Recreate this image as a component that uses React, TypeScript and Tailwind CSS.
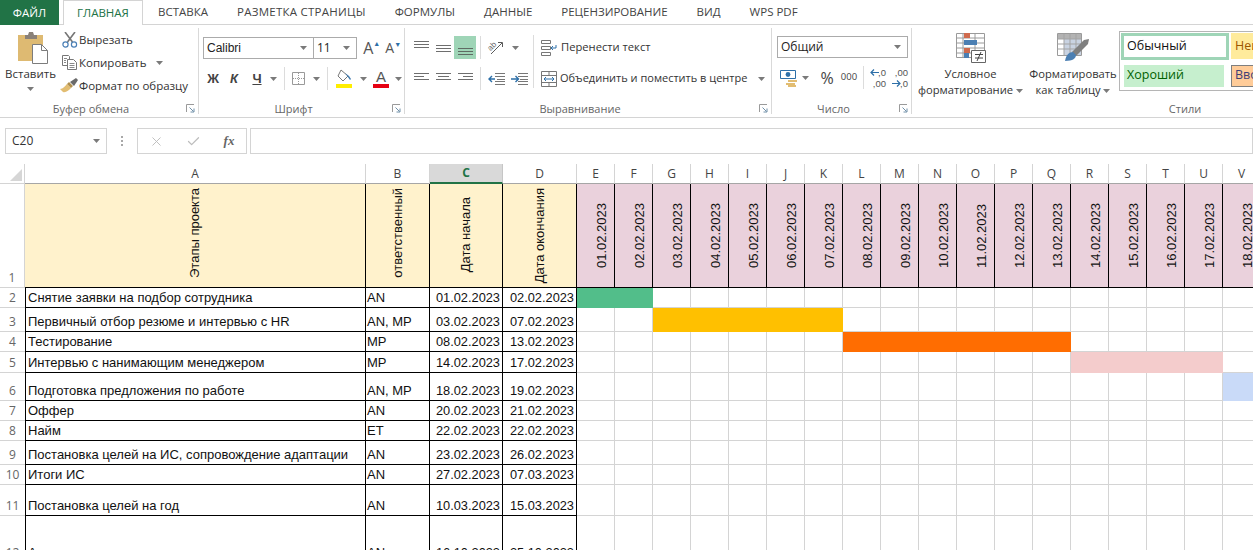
import type { ReactNode } from "react";
import { Check, X } from "lucide-react";

const tabs = ["ВСТАВКА", "РАЗМЕТКА СТРАНИЦЫ", "ФОРМУЛЫ", "ДАННЫЕ", "РЕЦЕНЗИРОВАНИЕ", "ВИД", "WPS PDF"];

const dateCols = "EFGHIJKLMNOPQRSTUV".split("");

type Row = { n: number; task: string; who: string; start: string; end: string; bar?: [number, number, string] };

const rows: Row[] = [
  { n: 2, task: "Снятие заявки на подбор сотрудника", who: "AN", start: "01.02.2023", end: "02.02.2023", bar: [0, 1, "bg-[#52be8a]"] },
  { n: 3, task: "Первичный отбор резюме и интервью с HR", who: "AN, MP", start: "03.02.2023", end: "07.02.2023", bar: [2, 6, "bg-[#ffc000]"] },
  { n: 4, task: "Тестирование", who: "MP", start: "08.02.2023", end: "13.02.2023", bar: [7, 12, "bg-[#ff6d01]"] },
  { n: 5, task: "Интервью с нанимающим менеджером", who: "MP", start: "14.02.2023", end: "17.02.2023", bar: [13, 16, "bg-[#f4cccc]"] },
  { n: 6, task: "Подготовка предложения по работе", who: "AN, MP", start: "18.02.2023", end: "19.02.2023", bar: [17, 17, "bg-[#c9daf8]"] },
  { n: 7, task: "Оффер", who: "AN", start: "20.02.2023", end: "21.02.2023" },
  { n: 8, task: "Найм", who: "ET", start: "22.02.2023", end: "22.02.2023" },
  { n: 9, task: "Постановка целей на ИС, сопровождение адаптации", who: "AN", start: "23.02.2023", end: "26.02.2023" },
  { n: 10, task: "Итоги ИС", who: "AN", start: "27.02.2023", end: "07.03.2023" },
  { n: 11, task: "Постановка целей на год", who: "AN", start: "10.03.2023", end: "15.03.2023" },
  { n: 12, task: "Адаптация", who: "AN", start: "16.10.2023", end: "25.10.2023" },
];

function Caret({ className = "" }: { className?: string }) {
  return (
    <svg width="7" height="4" viewBox="0 0 7 4" className={`flex-none ${className}`}>
      <path d="M0 0h7L3.5 4z" fill="#7a7a7a" />
    </svg>
  );
}

function Launcher() {
  return (
    <svg width="9" height="9" viewBox="0 0 9 9" className="flex-none">
      <path d="M0.5 8V0.5H8" fill="none" stroke="#9a9a9a" />
      <path d="M3.5 3.5L7.5 7.5M8 4.5V8H4.5" fill="none" stroke="#6f8fa8" />
    </svg>
  );
}

function Lines({ ys, x1 = [1, 1, 1], x2 = [16, 16, 16], color = "#6e6e6e" }: { ys: number[]; x1?: number[]; x2?: number[]; color?: string }) {
  return (
    <svg width="17" height="14" viewBox="0 0 17 14">
      {ys.map((y, i) => (
        <path key={y} d={`M${x1[i]} ${y + 0.5}H${x2[i]}`} stroke={color} />
      ))}
    </svg>
  );
}

function PasteIcon() {
  return (
    <svg width="30" height="32" viewBox="0 0 30 32">
      <path d="M0 3h25v26H0z" fill="#deba72" />
      <path d="M7 3h3l1-3h4l1 3h3v4H7z" fill="#8a8178" />
      <path d="M14.5 12.5h9l6 6v13h-15z" fill="#fff" stroke="#7c7c7c" />
      <path d="M23.5 12.5v6h6" fill="none" stroke="#7c7c7c" />
    </svg>
  );
}

function ScissorsIcon() {
  return (
    <svg width="16" height="16" viewBox="0 0 16 16">
      <path d="M3 0l7.5 10M13 0L5.5 10" stroke="#767676" strokeWidth="1.6" fill="none" />
      <circle cx="3.5" cy="12.5" r="2.6" fill="none" stroke="#4a7fb5" strokeWidth="1.2" />
      <circle cx="12" cy="12.5" r="2.6" fill="none" stroke="#4a7fb5" strokeWidth="1.2" />
    </svg>
  );
}

function CopyIcon() {
  return (
    <svg width="16" height="15" viewBox="0 0 16 15" fill="none" stroke="#777">
      <path d="M.5.5h6l1 1v9H.5z" fill="#fff" />
      <path d="M5.5 4.5h6l3 3v7h-9z" fill="#fff" />
      <path d="M7.5 8.5h5M7.5 10.5h5M7.5 12.5h5M2 3.5h3M2 5.5h2M2 7.5h2" stroke="#8a8a8a" />
    </svg>
  );
}

function BrushIcon() {
  return (
    <svg width="19" height="15" viewBox="0 0 19 15">
      <path d="M0 11c3 0 5-3 7-5l4 4c-2 2-5 5-8 4z" fill="#e2bd72" />
      <path d="M7 6l2-2 4 4-2 2z" fill="#b08f4e" />
      <path d="M10 4l6-4 2 2-4 6z" fill="#6a6a6a" />
    </svg>
  );
}

function BordersIcon() {
  return (
    <svg width="13" height="13" viewBox="0 0 13 13" fill="none">
      <path d="M.5.5h12v12H.5z" stroke="#9a9a9a" />
      <path d="M6.5 1v11M1 6.5h11" stroke="#9a9a9a" strokeDasharray="1 1" />
    </svg>
  );
}

function FillIcon() {
  return (
    <svg width="16" height="19" viewBox="0 0 16 19">
      <path d="M5 1l7 6-5 5-5-5z" fill="#fff" stroke="#777" />
      <path d="M9 4l4 3 2 3-1 1-5-7z" fill="#3f79ad" />
      <path d="M0 15h16v4H0z" fill="#ffee00" />
    </svg>
  );
}

function OrientIcon() {
  return (
    <svg width="18" height="15" viewBox="0 0 18 15" fill="none">
      <text x="1" y="9" fontSize="8" fill="#666" transform="rotate(-45 5 7)" fontFamily="Liberation Sans">ab</text>
      <path d="M4 14L15 3M11 2.5h4.5V7" stroke="#5a5a5a" />
    </svg>
  );
}

function IndentIcon({ right = false }: { right?: boolean }) {
  return (
    <svg width="17" height="12" viewBox="0 0 17 12" fill="none">
      <path d="M7 .5h10M7 3.5h10M9 6.5h8M7 8.5h10M7 11.5h10" stroke="#777" />
      <path d={right ? "M0 6h7M4.5 3L7.5 6l-3 3" : "M7 6H1M4 3L1 6l3 3"} stroke="#2d6fa8" strokeWidth="1.4" />
    </svg>
  );
}

function WrapIcon() {
  return (
    <svg width="16" height="16" viewBox="0 0 16 16" fill="none">
      <path d="M.5.5h9v3h-9zM.5 6.5h9v3h-9zM.5 12.5h9v3h-9z" stroke="#777" />
      <path d="M15 5v3h-5M12 6L10 8l2 2" stroke="#2d6fa8" />
    </svg>
  );
}

function MergeIcon() {
  return (
    <svg width="16" height="16" viewBox="0 0 16 16" fill="none">
      <path d="M.5.5h15v15H.5zM.5 4.5h15M.5 11.5h15M8 .5v4M8 11.5v4" stroke="#777" />
      <path d="M3 8h10M5 6L3 8l2 2M11 6l2 2-2 2" stroke="#2d6fa8" />
    </svg>
  );
}

function MoneyIcon() {
  return (
    <svg width="18" height="18" viewBox="0 0 18 18">
      <path d="M.5 1.5h15v8H.5z" fill="#fff" stroke="#2d6fa8" />
      <circle cx="8" cy="5.5" r="2.4" fill="#2d6fa8" />
      <path d="M8 11h9v2H8zM6 14h9v2H6zM8 16h8v2H8z" fill="#e2bd72" />
    </svg>
  );
}

function DecimalIcon({ top, bottom, down = false }: { top: string; bottom: string; down?: boolean }) {
  return (
    <span className="relative flex w-[16px] flex-none flex-col items-end [font-family:'Liberation_Sans',sans-serif] text-[9.5px] leading-[11px] text-[#555]">
      <span>{top}</span>
      <span>{bottom}</span>
      <svg width="9" height="7" viewBox="0 0 9 7" className={`absolute left-0 ${down ? "bottom-[2px]" : "top-[2px]"}`} fill="none" stroke="#2d6fa8" strokeWidth="1.2">
        <path d={down ? "M0 3.5h8M5 .5l3 3-3 3" : "M9 3.5H1M4 .5l-3 3 3 3"} />
      </svg>
    </span>
  );
}

function CondIcon() {
  return (
    <svg width="30" height="30" viewBox="0 0 30 30">
      <path d="M.5.5h28v24H.5zM.5 5h28M.5 10h28M.5 15h28M.5 20h28M7 .5v24M19 .5v24" fill="#fff" stroke="#9a9a9a" />
      <path d="M8 0h6v5H8zM8 15h6v5H8z" fill="#cf6a4d" />
      <path d="M8 7h13v5H8zM8 20h5v5H8z" fill="#4b7fb3" />
      <path d="M15.5 17.5h14v12h-14z" fill="#fff" stroke="#666" />
      <path d="M19 21.5h8M19 25h8M25 19l-4 9" stroke="#444" fill="none" />
    </svg>
  );
}

function TableIcon() {
  return (
    <svg width="32" height="29" viewBox="0 0 32 29">
      <path d="M.5.5h24v22H.5z" fill="#fff" stroke="#9a9a9a" />
      <path d="M1 1h23v5H1z" fill="#b3b3b3" />
      <path d="M7 6h17v16H7z" fill="#c9d3e2" />
      <path d="M.5 6h24M.5 11h24M.5 16h24M7 .5v22M13 .5v22M19 .5v22" stroke="#a3a3a3" fill="none" />
      <path d="M15 19L27 7l5-1-1 5-12 12z" fill="#7f7f7f" />
      <path d="M8 28c1-6 4-9 8-9l3 3c0 3-3 6-11 6z" fill="#4b7fb3" />
    </svg>
  );
}

function Group({ label, launcher = true, className, children }: { label: string; launcher?: boolean; className: string; children: ReactNode }) {
  return (
    <section className={`flex h-full flex-none flex-col border-r border-[#d9d9d9] ${className}`}>
      <div className="h-[72px] flex-none">{children}</div>
      <div className="flex flex-1 items-center pt-[3px]">
        <span className="flex-1 text-center text-[11px] leading-none text-[#666]">{label}</span>
        {launcher && (
          <span className="flex w-[16px] flex-none justify-end pr-[3px]">
            <Launcher />
          </span>
        )}
      </div>
    </section>
  );
}

function SmallAction({ icon, children }: { icon: ReactNode; children: ReactNode }) {
  return (
    <div className="flex h-[23px] items-center">
      <span className="flex w-[19px] flex-none justify-center">{icon}</span>
      {children}
    </div>
  );
}

function Combo({ className, children }: { className: string; children: ReactNode }) {
  return (
    <div className={`flex h-[22px] flex-none items-center justify-between border border-[#ababab] bg-white pl-[3px] pr-[6px] text-[12px] text-[#222] ${className}`}>
      {children}
      <Caret />
    </div>
  );
}

function Sep({ className = "" }: { className?: string }) {
  return <div className={`h-[23px] w-px flex-none bg-[#dcdcdc] ${className}`} />;
}

function Cell({ w, children }: { w: string; children: ReactNode }) {
  return <span className={`flex flex-none items-center justify-center ${w}`}>{children}</span>;
}

function Ribbon() {
  return (
    <div className="flex h-[93px] flex-none border-b border-[#d4d4d4] py-[3px] [font-family:'Open_Sans',sans-serif] text-[11.5px] text-[#333]">
      <Group label="Буфер обмена" className="w-[199px]">
        <div className="flex">
          <div className="flex w-[60px] flex-none flex-col items-center pt-[4px]">
            <span className="ml-[6px]"><PasteIcon /></span>
            <span className="ml-[1px] mt-[2px] leading-[16px]">Вставить</span>
            <Caret className="mt-[5px]" />
          </div>
          <div className="flex flex-col">
            <SmallAction icon={<ScissorsIcon />}>Вырезать</SmallAction>
            <SmallAction icon={<CopyIcon />}>
              Копировать
              <Caret className="ml-[9px]" />
            </SmallAction>
            <SmallAction icon={<BrushIcon />}>Формат по образцу</SmallAction>
          </div>
        </div>
      </Group>

      <Group label="Шрифт" className="w-[206px]">
        <div className="flex flex-col gap-[8px] pl-[4px] pt-[9px]">
          <div className="flex items-center">
            <Combo className="w-[111px]">
              <span className="[font-family:'Liberation_Sans',sans-serif] text-[12px]">Calibri</span>
            </Combo>
            <Combo className="-ml-px w-[44px]">
              <span>11</span>
            </Combo>
            <span className="ml-[4px] flex w-[24px] items-start justify-center text-[16px] leading-none text-[#555]">A<span className="text-[7px] text-[#2d6fa8]">▲</span></span>
            <span className="flex w-[24px] items-start justify-center text-[14px] leading-none text-[#555]">A<span className="text-[7px] text-[#2d6fa8]">▼</span></span>
          </div>
          <div className="flex h-[23px] items-center [font-family:'Liberation_Sans',sans-serif] text-[13px] font-bold text-[#444]">
            <Cell w="w-[20px]">Ж</Cell>
            <Cell w="w-[22px]"><i>К</i></Cell>
            <Cell w="w-[24px]"><u>Ч</u></Cell>
            <Cell w="w-[8px]"><Caret /></Cell>
            <Sep className="ml-[7px]" />
            <Cell w="w-[27px]"><BordersIcon /></Cell>
            <Cell w="w-[8px]"><Caret /></Cell>
            <Sep className="ml-[7px]" />
            <Cell w="w-[31px]"><FillIcon /></Cell>
            <Cell w="w-[8px]"><Caret /></Cell>
            <span className="ml-[2px] flex w-[24px] flex-none flex-col items-center text-[15px] font-normal leading-[14px] text-[#555]">
              A
              <span className="h-[4px] w-[16px] bg-[#e60012]" />
            </span>
            <Cell w="w-[9px] ml-[1px]"><Caret /></Cell>
          </div>
        </div>
      </Group>

      <Group label="Выравнивание" className="w-[367px]">
        <div className="flex h-full">
          <div className="flex w-[127px] flex-none flex-col gap-[8px] pl-[5px] pt-[8px]">
            <div className="flex h-[23px] items-center">
              <Cell w="w-[22px]"><Lines ys={[0, 3, 6]} /></Cell>
              <Cell w="w-[22px]"><Lines ys={[4, 7, 10]} /></Cell>
              <span className="flex h-[23px] w-[22px] flex-none items-end justify-center bg-[#9fd5b7] pb-[2px]"><Lines ys={[5, 8, 11]} color="#5f6b63" /></span>
              <Sep className="ml-[4px]" />
              <Cell w="w-[30px]"><OrientIcon /></Cell>
              <Caret className="ml-[1px]" />
            </div>
            <div className="flex h-[23px] items-center">
              <Cell w="w-[22px]"><Lines ys={[1, 4, 7]} x2={[16, 11, 16]} /></Cell>
              <Cell w="w-[22px]"><Lines ys={[1, 4, 7]} x1={[1, 3, 1]} x2={[16, 14, 16]} /></Cell>
              <Cell w="w-[22px]"><Lines ys={[1, 4, 7]} x1={[1, 6, 1]} /></Cell>
              <Sep className="ml-[4px]" />
              <Cell w="w-[26px] ml-[2px]"><IndentIcon /></Cell>
              <Cell w="w-[20px]"><IndentIcon right /></Cell>
            </div>
          </div>
          <div className="ml-[1px] mt-[7px] h-[53px] w-px flex-none self-start bg-[#dcdcdc]" />
          <div className="flex flex-1 flex-col gap-[8px] pl-[7px] pt-[8px] text-[11.2px]">
            <div className="flex h-[23px] items-center gap-[4px] whitespace-nowrap">
              <WrapIcon />
              Перенести текст
            </div>
            <div className="flex h-[23px] items-center gap-[3px] whitespace-nowrap text-[11px]">
              <MergeIcon />
              Объединить и поместить в центре
              <Caret className="ml-[8px]" />
            </div>
          </div>
        </div>
      </Group>

      <Group label="Число" className="w-[140px]">
        <div className="flex flex-col gap-[8px] pl-[5px] pt-[8px]">
          <Combo className="w-[131px]">
            <span className="text-[12px]">Общий</span>
          </Combo>
          <div className="flex h-[23px] items-center">
            <span className="ml-[3px]"><MoneyIcon /></span>
            <Caret className="ml-[4px]" />
            <span className="ml-[7px] w-[22px] flex-none text-center text-[16px] leading-none text-[#444]">%</span>
            <span className="w-[22px] flex-none text-center text-[9.5px] text-[#444]">000</span>
            <Sep className="ml-[3px]" />
            <span className="ml-[6px]"><DecimalIcon top=",0" bottom=",00" /></span>
            <span className="ml-[6px]"><DecimalIcon top=",00" bottom=",0" down /></span>
          </div>
        </div>
      </Group>

      <Group label="Стили" launcher={false} className="w-[546px] border-r-0">
        <div className="flex text-[11.2px]">
          <div className="flex w-[117px] flex-none flex-col items-center pt-[5px]">
            <CondIcon />
            <span className="mt-[3px] text-center leading-[16px]">
              Условное
              <br />
              форматирование <Caret className="inline align-middle" />
            </span>
          </div>
          <div className="flex w-[88px] flex-none flex-col items-center pt-[5px]">
            <TableIcon />
            <span className="mt-[4px] whitespace-nowrap text-center leading-[16px]">
              Форматировать
              <br />
              как таблицу <Caret className="inline align-middle" />
            </span>
          </div>
          <div className="ml-[2px] mt-[3px] grid h-[60px] w-[300px] flex-none grid-cols-[108px_108px_84px] border border-[#b5b5b5] p-px text-[12.5px]">
            <span className="flex h-[27px] items-center border-[3px] border-[#9fd5b7] bg-white pl-[3px] text-[#111]">Обычный</span>
            <span className="ml-[2px] flex h-[26px] items-center bg-[#ffeb9c] pl-[4px] text-[#9c5700]">Нейтральный</span>
            <span />
            <span className="ml-[3px] mr-[5px] mt-[2px] flex h-[22px] items-center bg-[#c6efce] pl-[3px] text-[#006100]">Хороший</span>
            <span className="ml-[2px] mt-[2px] flex h-[22px] items-center border border-[#7f7f7f] bg-[#ffcc99] pl-[3px] text-[#3f3f76]">Ввод</span>
          </div>
        </div>
      </Group>
    </div>
  );
}

function FormulaBar() {
  return (
    <div className="flex h-[46px] flex-none items-start gap-0 pt-[10px] [font-family:'Open_Sans',sans-serif]">
      <div className="ml-[5px] flex h-[26px] w-[102px] flex-none items-center justify-between border border-[#d4d4d4] pl-[6px] pr-[6px] text-[12px] text-[#333]">
        C20
        <Caret />
      </div>
      <div className="flex h-[26px] w-[30px] flex-none flex-col items-center justify-center gap-[2px]">
        <span className="h-[2px] w-[2px] bg-[#a8a8a8]" />
        <span className="h-[2px] w-[2px] bg-[#a8a8a8]" />
        <span className="h-[2px] w-[2px] bg-[#a8a8a8]" />
      </div>
      <div className="flex h-[26px] w-[110px] flex-none items-center border border-[#d4d4d4]">
        <span className="flex w-[37px] justify-center"><X size={15} strokeWidth={1.5} color="#bdbdbd" /></span>
        <span className="flex w-[37px] justify-center"><Check size={15} strokeWidth={2} color="#bdbdbd" /></span>
        <span className="w-[34px] text-center [font-family:'Liberation_Serif',serif] text-[13px] font-bold italic text-[#666]">fx</span>
      </div>
      <div className="ml-[3px] h-[26px] flex-1 border border-[#d4d4d4]" />
    </div>
  );
}

const rotated = "[writing-mode:vertical-rl] rotate-180 whitespace-nowrap";

function Sheet() {
  return (
    <div className="grid flex-none grid-cols-[25px_341px_64px_73px_74px_repeat(18,38px)] grid-rows-[20px_104px_20px_24px_20px_21px_28px_20px_20px_24px_20px_31px_47px] [font-family:'Liberation_Sans',sans-serif] text-[13px] text-[#111]">
      {/* column letters */}
      <div className="flex items-end justify-end border-r border-b border-[#d4d4d4] pb-[2px] pr-[2px]">
        <svg width="12" height="12" viewBox="0 0 12 12"><path d="M12 0v12H0z" fill="#d6d6d6" /></svg>
      </div>
      {["A", "B", "C", "D", ...dateCols].map((c) => (
        <div
          key={c}
          className={
            c === "C"
              ? "flex items-center justify-center border-b-2 border-r border-b-[#217346] border-r-[#c6c6c6] bg-[#d9d9d9] [font-family:'Open_Sans',sans-serif] text-[12px] font-bold text-[#217346]"
              : "flex items-center justify-center border-b border-r border-b-[#a6a6a6] border-r-[#d4d4d4] [font-family:'Open_Sans',sans-serif] text-[12px] text-[#444]"
          }
        >
          {c}
        </div>
      ))}

      {/* header row */}
      <div className="flex items-end justify-center border-b border-r border-[#d4d4d4] [font-family:'Open_Sans',sans-serif] text-[12px] text-[#666]">1</div>
      <div className="flex items-end justify-center border-b border-r border-black bg-[#fff2cc] pb-[9px]"><span className={rotated}>Этапы проекта</span></div>
      <div className="flex items-end justify-center border-b border-r border-black bg-[#fff2cc] pb-[9px]"><span className={rotated}>ответственный</span></div>
      <div className="flex items-end justify-center border-b border-r border-black bg-[#fff2cc] pb-[15px]"><span className={rotated}>Дата начала</span></div>
      <div className="flex items-end justify-center border-b border-r border-black bg-[#fff2cc] pb-[4px]"><span className={rotated}>Дата окончания</span></div>
      {dateCols.map((c, i) => (
        <div key={c} className="flex items-end justify-end border-b border-r border-black bg-[#ead1dc] pb-[19px] pr-[3px]">
          <span className={rotated}>{String(i + 1).padStart(2, "0")}.02.2023</span>
        </div>
      ))}

      {/* data rows */}
      {rows.map((r) => (
        <div key={r.n} className="contents">
          <div className="flex items-end justify-center border-b border-[#d4d4d4] pb-px [font-family:'Open_Sans',sans-serif] text-[12px] leading-[16px] text-[#666]">{r.n}</div>
          <div className="flex items-end border-x border-b border-black pb-px pl-[2px] leading-[16px]">{r.task}</div>
          <div className="flex items-end border-b border-r border-black pb-px pl-[1px] leading-[16px]">{r.who}</div>
          <div className="flex items-end justify-end border-b border-r border-black pb-px pr-[2px] text-[12.8px] leading-[16px]">{r.start}</div>
          <div className="flex items-end justify-end border-b border-r border-black pb-px pr-[2px] text-[12.8px] leading-[16px]">{r.end}</div>
          {dateCols.map((c, j) => {
            const on = r.bar && j >= r.bar[0] && j <= r.bar[1];
            return <div key={c} className={on ? `border-b border-r border-transparent ${r.bar![2]}` : "border-b border-r border-[#d4d4d4]"} />;
          })}
        </div>
      ))}
    </div>
  );
}

export default function App() {
  return (
    <div className="flex h-[550px] w-[1253px] flex-col overflow-hidden bg-white">
      <div className="flex h-[25px] flex-none border-b border-[#d4d4d4] [font-family:'Open_Sans',sans-serif] text-[11.5px] text-[#444]">
        <div className="flex h-[25px] w-[59px] items-center justify-center bg-[#217346] text-white">ФАЙЛ</div>
        <div className="ml-[4px] flex h-[25px] w-[80px] items-center justify-center border-x border-t border-[#d4d4d4] bg-white text-[#217346]">ГЛАВНАЯ</div>
        <div className="ml-[0.5px] flex">
          {tabs.map((t) => (
            <span key={t} className={t === "РАЗМЕТКА СТРАНИЦЫ" ? "flex h-[24px] items-center whitespace-nowrap px-[14.5px] tracking-[0.25px]" : "flex h-[24px] items-center whitespace-nowrap px-[14.5px]"}>{t}</span>
          ))}
        </div>
      </div>
      <Ribbon />
      <FormulaBar />
      <Sheet />
    </div>
  );
}
